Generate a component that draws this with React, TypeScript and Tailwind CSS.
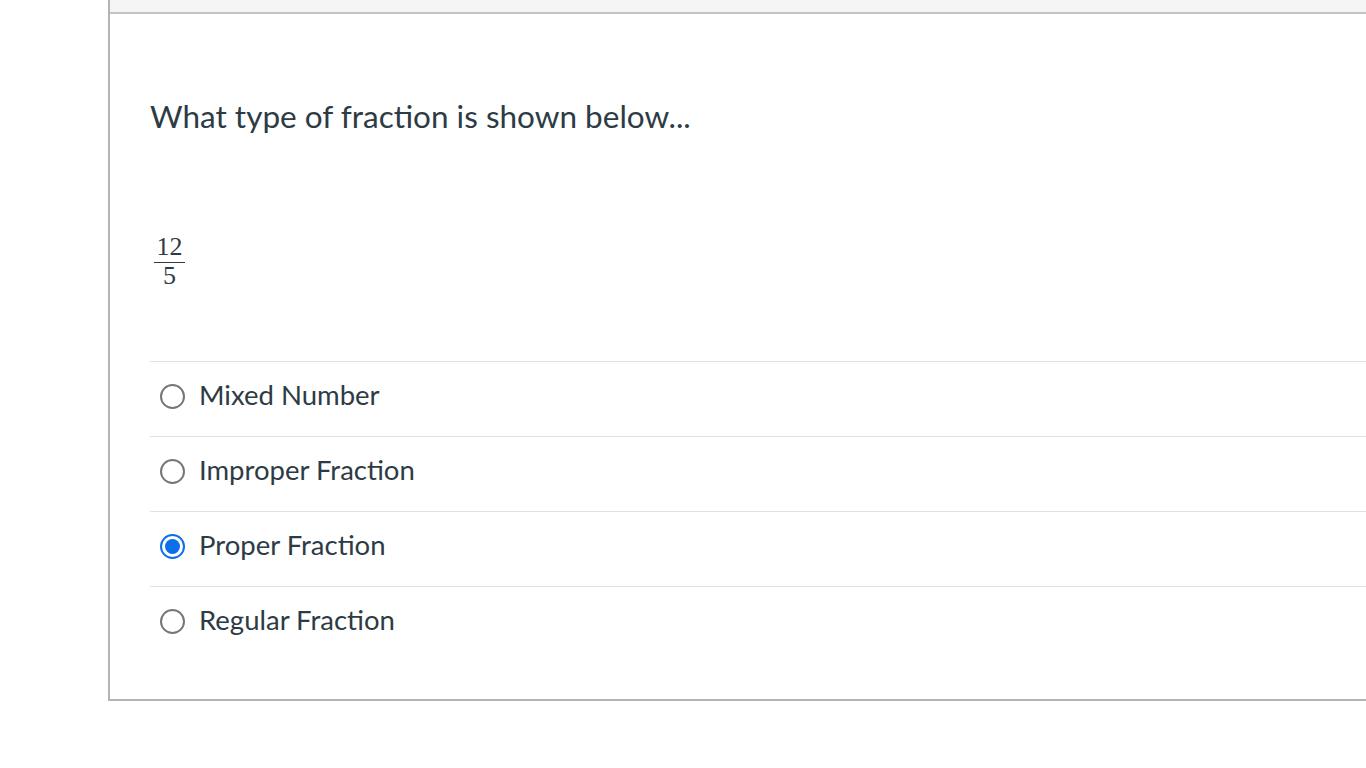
import React from 'react';

const options = [
  { label: 'Mixed Number', checked: false },
  { label: 'Improper Fraction', checked: false },
  { label: 'Proper Fraction', checked: true },
  { label: 'Regular Fraction', checked: false },
];

const Radio: React.FC<{ checked: boolean }> = ({ checked }) =>
  checked ? (
    <span className="w-[25px] h-[25px] rounded-full border-2 border-[#0b6fe8] flex items-center justify-center flex-shrink-0">
      <span className="w-[15px] h-[15px] rounded-full bg-[#0b6fe8]" />
    </span>
  ) : (
    <span className="w-[25px] h-[25px] rounded-full border-2 border-[#767676] flex-shrink-0" />
  );

export default function App() {
  return (
    <div className="w-full h-[768px] bg-white pl-[108px] overflow-hidden" style={{ fontFamily: 'Lato, "Noto Sans", sans-serif' }}>
      <div className="border-l-2 border-b-2 border-[#b4b4b4] text-[#2d3b45]">
        {/* 题目头部 */}
        <div className="h-[14px] bg-[#f5f5f5] border-b-2 border-[#c4c4c4]" />

        <div className="pl-10 pt-[79px] pb-[38px]">
          <div className="text-[31.5px] leading-[47px]">What type of fraction is shown below...</div>

          {/* 分数 */}
          <div className="mt-[94px] ml-1 inline-flex flex-col items-center w-[31px]" style={{ fontFamily: '"Liberation Serif", serif' }}>
            <span className="text-[26px] leading-[26px]">12</span>
            <span className="w-full h-px bg-[#2d3b45] mt-[2px]" />
            <span className="text-[26px] leading-[26px]">5</span>
          </div>

          <div className="mt-[72px]">
            {options.map((opt) => (
              <div key={opt.label} className="h-[75px] border-t border-[#dfe2e4] flex items-center pl-[10px] pb-[6px] gap-[14px]">
                <Radio checked={opt.checked} />
                <span className="text-[27.5px] mb-[3px]">{opt.label}</span>
              </div>
            ))}
          </div>
        </div>
      </div>
    </div>
  );
}
